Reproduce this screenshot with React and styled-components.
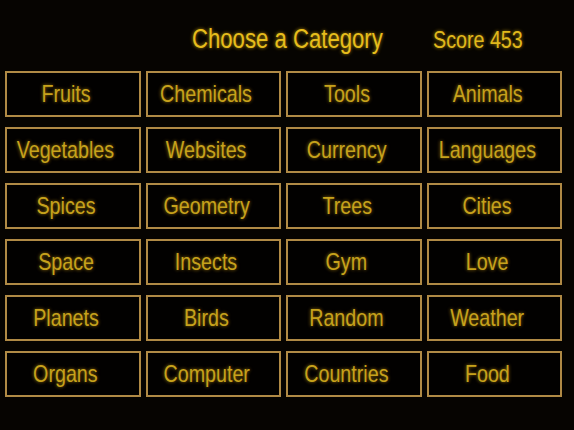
import React from "react";
import styled, { createGlobalStyle } from "styled-components";

const GlobalStyle = createGlobalStyle`
  html, body {
    margin: 0;
    padding: 0;
    background: #060401;
  }
  body {
    font-family: "Liberation Sans", Arial, sans-serif;
  }
`;

const Page = styled.div`
  width: 574px;
  height: 430px;
  box-sizing: border-box;
  padding: 24px 12px 0 5px;
  background: #060401;
`;

const Header = styled.header`
  display: flex;
  align-items: baseline;
  padding-left: 187px;
  gap: 8px;
  height: 47px;
  white-space: nowrap;
`;

/* condensed face: the reference uses a narrow Helvetica-like font */
const Narrow = styled.span`
  display: inline-block;
  white-space: nowrap;
  transform: scaleX(0.82);
  transform-origin: ${(p) => (p.$origin === "left" ? "left center" : "center")};
`;

const Title = styled.h1`
  margin: 0;
  font-size: 27px;
  font-weight: normal;
  color: #e6bd1c;
  text-shadow: 0 0 4px rgba(240, 190, 20, 0.75);
`;

const Score = styled.div`
  font-size: 24px;
  color: #e0b81c;
  text-shadow: 0 0 4px rgba(240, 190, 20, 0.7);
`;

const Grid = styled.div`
  display: grid;
  grid-template-columns: repeat(4, minmax(0, 1fr));
  grid-auto-rows: 46px;
  column-gap: 5px;
  row-gap: 10px;
`;

const Tile = styled.button`
  box-sizing: border-box;
  min-width: 0;
  border: 2px solid #b08a45;
  background: #020100;
  padding: 0 14px 0 0;
  font-family: inherit;
  font-size: 24px;
  color: #c6a21c;
  text-shadow: 0 0 4px rgba(225, 170, 20, 0.7);
  display: flex;
  align-items: center;
  justify-content: center;
  cursor: pointer;
  overflow: visible;
`;

const categories = [
  "Fruits", "Chemicals", "Tools", "Animals",
  "Vegetables", "Websites", "Currency", "Languages",
  "Spices", "Geometry", "Trees", "Cities",
  "Space", "Insects", "Gym", "Love",
  "Planets", "Birds", "Random", "Weather",
  "Organs", "Computer", "Countries", "Food",
];

export default function App() {
  return (
    <>
      <GlobalStyle />
      <Page>
        <Header>
          <Title>
            <Narrow $origin="left">Choose a Category</Narrow>
          </Title>
          <Score>
            <Narrow $origin="left">Score 453</Narrow>
          </Score>
        </Header>
        <Grid>
          {categories.map((c) => (
            <Tile key={c}>
              <Narrow>{c}</Narrow>
            </Tile>
          ))}
        </Grid>
      </Page>
    </>
  );
}
